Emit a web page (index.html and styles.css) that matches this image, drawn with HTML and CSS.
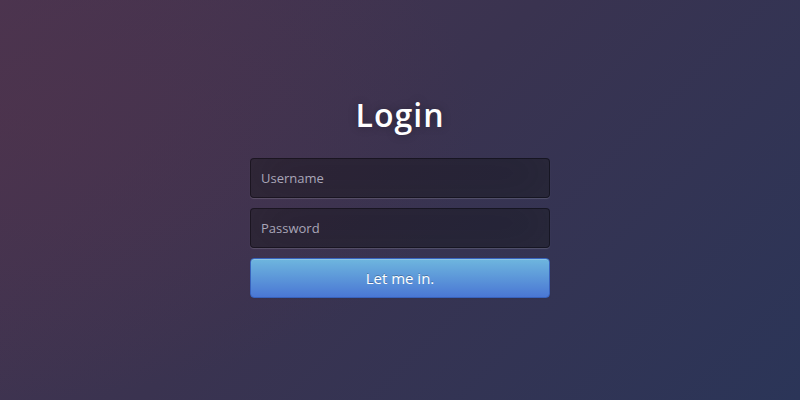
FILE: index.html
```html
<!DOCTYPE html>
<html>
<head>
<meta charset="utf-8">
<link rel="stylesheet" href="styles.css">
</head>
<body>
<main class="page">
  <form class="login">
    <h1 class="title">Login</h1>
    <input class="field" type="text" placeholder="Username">
    <input class="field" type="password" placeholder="Password">
    <button class="btn" type="button">Let me in.</button>
  </form>
</main>
</body>
</html>
```
FILE: styles.css
```css
html, body {
  margin: 0;
  padding: 0;
  width: 800px;
  height: 400px;
  overflow: hidden;
}
body {
  font-family: "Open Sans", "Noto Sans", sans-serif;
  background:
    radial-gradient(ellipse 60% 70% at 0% 30%, rgba(80, 50, 75, 0.55) 0%, rgba(80, 50, 75, 0) 100%),
    linear-gradient(135deg, #4a3550 0%, #3a3350 45%, #2b3558 100%);
}
.page {
  display: flex;
  justify-content: center;
  padding-top: 93px;
}
.login {
  width: 300px;
  display: flex;
  flex-direction: column;
  gap: 10px;
}
.title {
  margin: 0 0 11px;
  color: #fff;
  font-size: 32px;
  line-height: 44px;
  font-weight: 600;
  letter-spacing: 1px;
  text-align: center;
  text-shadow: 0 0 10px rgba(0, 0, 0, 0.3);
}
.field {
  box-sizing: border-box;
  width: 300px;
  height: 40px;
  margin: 0;
  padding: 0 10px;
  font-family: inherit;
  font-size: 13px;
  color: #fff;
  background: rgba(0, 0, 0, 0.35);
  border: 1px solid rgba(0, 0, 0, 0.35);
  border-radius: 4px;
  outline: none;
  box-shadow: inset 0 -5px 45px rgba(100, 100, 100, 0.12), 0 1px 1px rgba(255, 255, 255, 0.15);
}
.field::placeholder {
  color: #a9a6b8;
}
.btn {
  box-sizing: border-box;
  width: 300px;
  height: 40px;
  margin: 0;
  font-family: inherit;
  font-size: 15px;
  color: #fff;
  text-shadow: 0 -1px 0 rgba(0, 0, 0, 0.25);
  background: linear-gradient(to bottom, #6eb6de, #4a77d4);
  border: 1px solid #3762bc;
  border-radius: 4px;
  box-shadow: inset 0 1px 0 rgba(255, 255, 255, 0.2), 0 1px 2px rgba(0, 0, 0, 0.05);
  cursor: pointer;
}
```
